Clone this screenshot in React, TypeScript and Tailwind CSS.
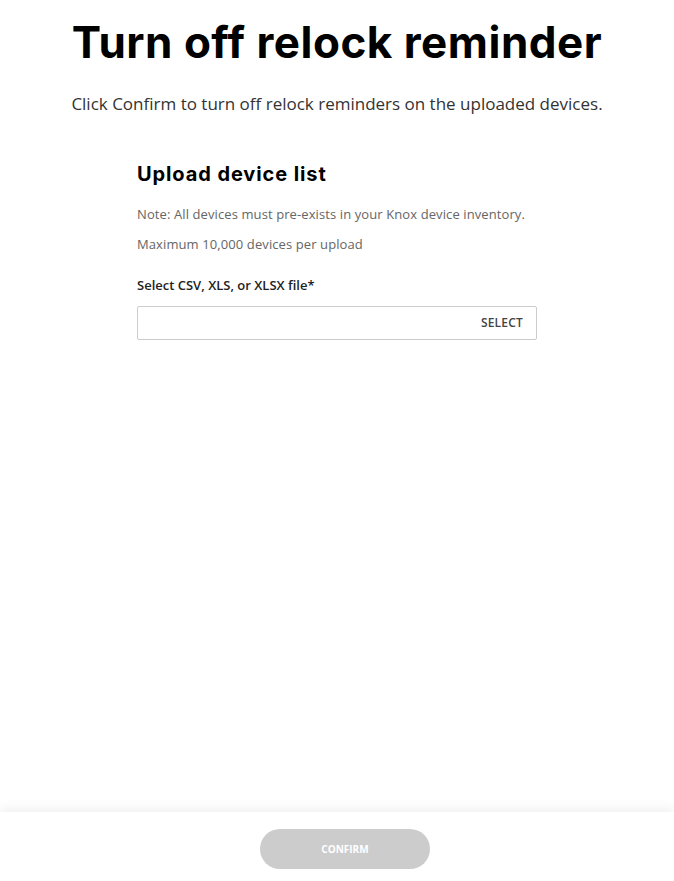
export default function App() {
  return (
    <div className="flex h-[881px] w-full flex-col bg-white" style={{ fontFamily: '"Open Sans", "Liberation Sans", sans-serif' }}>
      <main className="flex flex-1 flex-col items-center">
        <h1 className="mt-[14px] text-[44px] font-bold leading-[56px] tracking-[0.5px] text-black" style={{ fontFamily: 'Inter, "Liberation Sans", sans-serif' }}>
          Turn off relock reminder
        </h1>
        <p className="mt-[22px] text-[17px] leading-[24px] text-[#333]">
          Click Confirm to turn off relock reminders on the uploaded devices.
        </p>

        <section className="mt-[44px] w-[400px]">
          <h2 className="text-[20px] font-bold leading-[28px] tracking-[0.9px] text-black" style={{ fontFamily: 'Inter, "Liberation Sans", sans-serif' }}>
            Upload device list
          </h2>
          <p className="mt-[17px] text-[13px] leading-[18px] tracking-[0.1px] text-[#666]">
            Note: All devices must pre-exists in your Knox device inventory.
          </p>
          <p className="mt-[12px] text-[13px] leading-[18px] tracking-[0.1px] text-[#666]">Maximum 10,000 devices per upload</p>
          <label className="mt-[23px] block text-[13px] font-semibold leading-[18px] text-[#222]">
            Select CSV, XLS, or XLSX file*
          </label>
          <div className="mt-[12px] flex h-[34px] items-center justify-end rounded-[2px] border border-[#ccc] px-[13px]">
            <button type="button" className="text-[12px] font-semibold tracking-[0.2px] text-[#444]">
              SELECT
            </button>
          </div>
        </section>
      </main>

      <footer className="flex h-[69px] items-start justify-center bg-white pl-[16px] pt-[17px] shadow-[0_-4px_10px_rgba(0,0,0,0.06)]">
        <button
          type="button"
          disabled
          className="h-[40px] w-[170px] rounded-full bg-[#cccccc] text-[10px] font-bold text-white"
        >
          CONFIRM
        </button>
      </footer>
    </div>
  )
}
